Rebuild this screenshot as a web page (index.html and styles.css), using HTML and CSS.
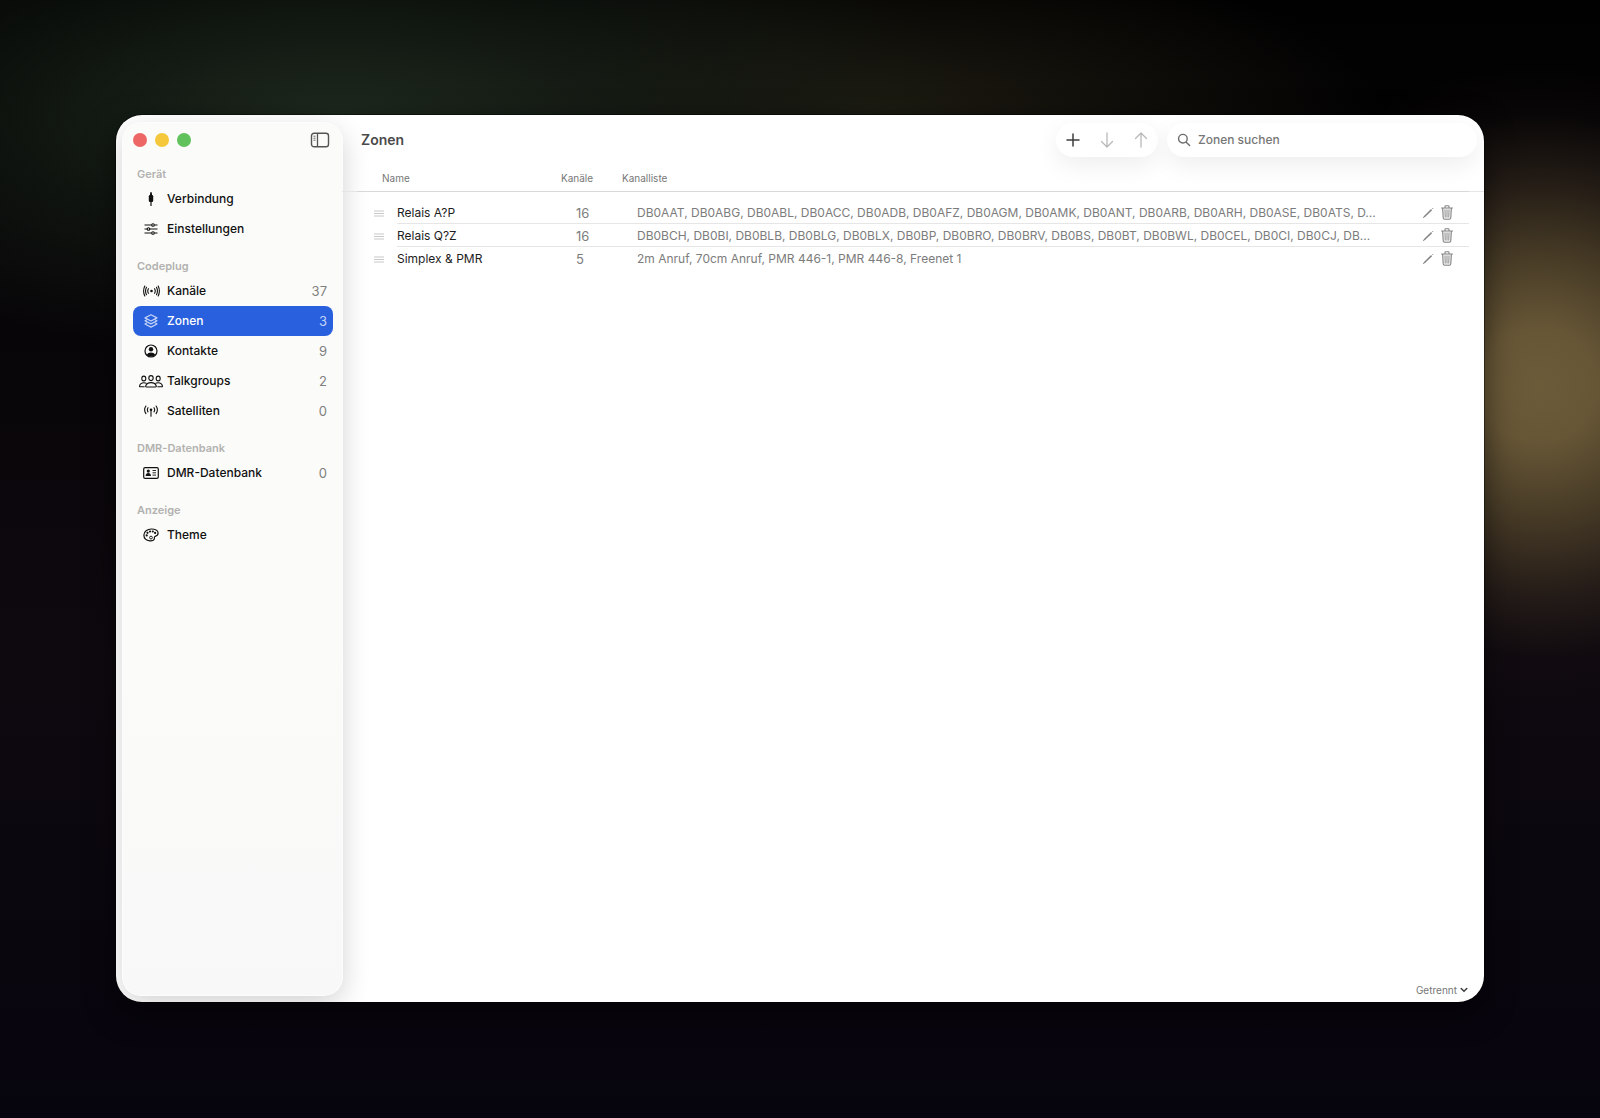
FILE: index.html
```html
<!DOCTYPE html>
<html lang="de">
<head>
  <meta charset="UTF-8">
  <meta name="viewport" content="width=device-width, initial-scale=1.0">
  <title>Zonen</title>
  <link rel="stylesheet" href="styles.css">
</head>
<body>

  <!-- shared icons -->
  <svg width="0" height="0" class="sprite" aria-hidden="true">
    <symbol id="pencil" viewBox="0 0 12 12">
      <path d="M2 10L9.600 2.600" stroke="currentColor" stroke-width="1.500" fill="none"/>
      <path d="M10.200 2L11 1.200M1.200 10.800L2 10" stroke="currentColor" stroke-width="1"/>
    </symbol>
    <symbol id="trash" viewBox="0 0 12 15">
      <path d="M1.600 3l.6 9.700q.1 1.500 1.500 1.500h4.600q1.400 0 1.500-1.500l.6-9.700z" fill="#ececec"/>
      <path d="M.5 3h11M4 3V1.600Q4 .8 4.800.8h2.400q.8 0 .8.800V3M1.600 3l.6 9.700q.1 1.500 1.500 1.500h4.600q1.400 0 1.500-1.500l.6-9.700" fill="none" stroke="currentColor" stroke-width="1.100" stroke-linecap="round"/>
      <path d="M4 5l.3 7M6 5v7M8 5l-.3 7" fill="none" stroke="currentColor" stroke-width=".8" stroke-linecap="round"/>
    </symbol>
    <symbol id="grip" viewBox="0 0 10 7">
      <path d="M0 1h10M0 3.500h10M0 6h10" stroke="currentColor" stroke-width="1.200"/>
    </symbol>
  </svg>

  <div class="window">
    <aside class="sidebar">
      <div class="titlebar">
        <div class="lights">
          <button class="light red" aria-label="Schließen"></button>
          <button class="light yellow" aria-label="Minimieren"></button>
          <button class="light green" aria-label="Vollbild"></button>
        </div>
        <button class="toggle" aria-label="Seitenleiste">
          <svg width="20" height="16" viewBox="0 0 20 16" fill="none" stroke="currentColor">
            <rect x="1.500" y="1.200" width="17" height="13.600" rx="2.600" stroke-width="1.400"/>
            <path d="M7.500 1v14" stroke-width="1.300"/>
            <path d="M3.500 4.200h2M3.500 6.200h2M3.500 8.200h2" stroke-width=".9"/>
          </svg>
        </button>
      </div>

      <nav>
        <h2>Gerät</h2>
        <ul>
          <li><a href="#">
            <span class="icon"><svg width="8" height="16" viewBox="0 0 8 16"><path d="M4 1v14" stroke="currentColor" stroke-width="1.200"/><path d="M3 2.200h2v2H3z" fill="currentColor"/><rect x="1.800" y="4" width="4.400" height="7" rx="1.200" fill="currentColor"/></svg></span>
            Verbindung</a></li>
          <li><a href="#">
            <span class="icon"><svg width="14" height="12" viewBox="0 0 14 12" fill="none" stroke="currentColor" stroke-width="1.100"><path d="M.5 2h7.200M10.300 2h3.200M.5 6h2.700M5.800 6h7.700M.5 10h7.200M10.300 10h3.200"/><circle cx="9" cy="2" r="1.300"/><circle cx="4.500" cy="6" r="1.300"/><circle cx="9" cy="10" r="1.300"/></svg></span>
            Einstellungen</a></li>
        </ul>

        <h2>Codeplug</h2>
        <ul>
          <li><a href="#">
            <span class="icon"><svg width="17" height="12" viewBox="0 0 17 12" fill="none" stroke="currentColor" stroke-width="1.100" stroke-linecap="round"><circle cx="8.500" cy="6" r="1.300" fill="currentColor" stroke="none"/><path d="M5.400 3.700q-1.300 2.300 0 4.600M11.600 3.700q1.300 2.300 0 4.600M3.500 2.300q-1.900 3.700 0 7.400M13.500 2.300q1.900 3.700 0 7.400M1.800 1q-2.400 5 0 10M15.200 1q2.400 5 0 10"/></svg></span>
            Kanäle <span class="count">37</span></a></li>
          <li><a href="#" class="active">
            <span class="icon"><svg width="14" height="14" viewBox="0 0 14 14" fill="none" stroke="currentColor" stroke-width="1.200" stroke-linejoin="round" stroke-linecap="round"><path d="M7 .8l6 3.100-6 3.100-6-3.100zM2.600 5.900L1 6.800l6 3.100 6-3.100-1.600-.9M2.600 9.100L1 10l6 3.100 6-3.100-1.600-.9"/></svg></span>
            Zonen <span class="count">3</span></a></li>
          <li><a href="#">
            <span class="icon"><svg width="14" height="14" viewBox="0 0 14 14"><circle cx="7" cy="7" r="6" fill="none" stroke="currentColor" stroke-width="1.200"/><circle cx="7" cy="5.300" r="2.200" fill="currentColor"/><path d="M2.700 10.800Q4 8.400 7 8.400t4.300 2.400Q9.500 12.800 7 12.800t-4.300-2z" fill="currentColor"/></svg></span>
            Kontakte <span class="count">9</span></a></li>
          <li><a href="#">
            <span class="icon"><svg width="24" height="13" viewBox="0 0 24 13" fill="none" stroke="currentColor" stroke-width="1.100"><ellipse cx="4.800" cy="3.500" rx="2" ry="2.400"/><ellipse cx="12" cy="3.100" rx="2.200" ry="2.500"/><ellipse cx="19.200" cy="3.500" rx="2" ry="2.400"/><path d="M7.400 12q-.9 0-.7-1Q7.600 7.600 12 7.600t5.300 3.400q.2 1-.7 1zM5.600 11.800H1.200q-.8 0-.6-.9.700-3.200 4.200-3.200 1.700 0 2.700.7M18.400 11.800h4.400q.8 0 .6-.9-.7-3.200-4.200-3.200-1.700 0-2.700.7"/></svg></span>
            Talkgroups <span class="count">2</span></a></li>
          <li><a href="#">
            <span class="icon"><svg width="14" height="12" viewBox="0 0 14 12" fill="none" stroke="currentColor" stroke-width="1.100" stroke-linecap="round"><circle cx="7" cy="4.800" r="1.300" fill="currentColor" stroke="none"/><path d="M7 5v6.300M4 2.700q-1.300 2.100 0 4.200M10 2.700q1.300 2.100 0 4.200M1.900 1q-2.600 3.800 0 7.600M12.100 1q2.600 3.800 0 7.600"/></svg></span>
            Satelliten <span class="count">0</span></a></li>
        </ul>

        <h2>DMR-Datenbank</h2>
        <ul>
          <li><a href="#">
            <span class="icon"><svg width="16" height="12" viewBox="0 0 16 12" fill="none" stroke="currentColor"><rect x=".7" y=".7" width="14.600" height="10.600" rx="1.400" stroke-width="1.200"/><circle cx="5.300" cy="4.100" r="1.600" fill="currentColor" stroke="none"/><path d="M2.600 9Q2.800 6 5.300 6t2.700 3z" fill="currentColor" stroke="none"/><path d="M9.500 3.500H13M9.500 5.800H13M9.500 8.100H13" stroke-width=".9"/></svg></span>
            DMR-Datenbank <span class="count">0</span></a></li>
        </ul>

        <h2>Anzeige</h2>
        <ul>
          <li><a href="#">
            <span class="icon"><svg width="16" height="14" viewBox="0 0 16 14" fill="none" stroke="currentColor"><path d="M12.200 8.300c-1.300.3-.6 1.500-.9 2.600C10.900 12.500 9 13 7 12.900 3.400 12.700.9 10.400.9 7.100.9 3.500 4.300 1 8.300 1c3.700 0 6.800 1.600 6.800 4.100 0 2.100-1.500 2.900-2.900 3.200z" stroke-width="1.200"/><circle cx="8" cy="9.600" r="1.400" stroke-width=".9"/><g fill="currentColor" stroke="none"><circle cx="3.700" cy="7.400" r="1.100"/><circle cx="4.500" cy="4.800" r="1.100"/><circle cx="7" cy="3.500" r="1.100"/><circle cx="9.800" cy="3.500" r="1.100"/><circle cx="12.100" cy="4.900" r="1.100"/></g></svg></span>
            Theme</a></li>
        </ul>
      </nav>
    </aside>

    <main>
      <header class="toolbar">
        <h1>Zonen</h1>
        <div class="actions">
          <button aria-label="Hinzufügen">
            <svg width="14" height="14" viewBox="0 0 14 14" fill="none" stroke="currentColor" stroke-width="1.500" stroke-linecap="round"><path d="M7 1v12M1 7h12"/></svg>
          </button>
          <button aria-label="Nach unten" disabled>
            <svg width="14" height="16" viewBox="0 0 14 16" fill="none" stroke="currentColor" stroke-width="1.300" stroke-linecap="round" stroke-linejoin="round"><path d="M7 1v14M1.500 9.500L7 15l5.500-5.500"/></svg>
          </button>
          <button aria-label="Nach oben" disabled>
            <svg width="14" height="16" viewBox="0 0 14 16" fill="none" stroke="currentColor" stroke-width="1.300" stroke-linecap="round" stroke-linejoin="round"><path d="M7 15V1M1.500 6.500L7 1l5.500 5.500"/></svg>
          </button>
        </div>
        <label class="search">
          <svg width="14" height="14" viewBox="0 0 14 14" fill="none" stroke="currentColor" stroke-width="1.400" stroke-linecap="round"><circle cx="5.900" cy="5.700" r="4.300"/><path d="M9.200 9.200l3.400 3.400"/></svg>
          <input type="text" placeholder="Zonen suchen" aria-label="Zonen suchen">
        </label>
      </header>

      <div class="content">
        <table>
          <colgroup>
            <col class="col-grip">
            <col class="col-name">
            <col class="col-count">
            <col>
            <col class="col-edit">
          </colgroup>
          <thead>
            <tr>
              <th colspan="2" class="first">Name</th>
              <th>Kanäle</th>
              <th colspan="2">Kanalliste</th>
            </tr>
          </thead>
          <tbody>
            <tr>
              <td class="grip"><svg width="10" height="7"><use href="#grip"/></svg></td>
              <td class="name">Relais A?P</td>
              <td class="num">16</td>
              <td>DB0AAT, DB0ABG, DB0ABL, DB0ACC, DB0ADB, DB0AFZ, DB0AGM, DB0AMK, DB0ANT, DB0ARB, DB0ARH, DB0ASE, DB0ATS, D...</td>
              <td class="edit">
                <div>
                  <button aria-label="Bearbeiten"><svg width="12" height="12"><use href="#pencil"/></svg></button>
                  <button aria-label="Löschen"><svg width="12" height="15"><use href="#trash"/></svg></button>
                </div>
              </td>
            </tr>
            <tr>
              <td class="grip"><svg width="10" height="7"><use href="#grip"/></svg></td>
              <td class="name">Relais Q?Z</td>
              <td class="num">16</td>
              <td>DB0BCH, DB0BI, DB0BLB, DB0BLG, DB0BLX, DB0BP, DB0BRO, DB0BRV, DB0BS, DB0BT, DB0BWL, DB0CEL, DB0CI, DB0CJ, DB...</td>
              <td class="edit">
                <div>
                  <button aria-label="Bearbeiten"><svg width="12" height="12"><use href="#pencil"/></svg></button>
                  <button aria-label="Löschen"><svg width="12" height="15"><use href="#trash"/></svg></button>
                </div>
              </td>
            </tr>
            <tr>
              <td class="grip"><svg width="10" height="7"><use href="#grip"/></svg></td>
              <td class="name">Simplex &amp; PMR</td>
              <td class="num">5</td>
              <td>2m Anruf, 70cm Anruf, PMR 446-1, PMR 446-8, Freenet 1</td>
              <td class="edit">
                <div>
                  <button aria-label="Bearbeiten"><svg width="12" height="12"><use href="#pencil"/></svg></button>
                  <button aria-label="Löschen"><svg width="12" height="15"><use href="#trash"/></svg></button>
                </div>
              </td>
            </tr>
          </tbody>
        </table>
      </div>

      <footer>
        <button class="status">Getrennt
          <svg width="8" height="6" viewBox="0 0 8 6" fill="none" stroke="currentColor" stroke-width="1.600" stroke-linecap="round" stroke-linejoin="round"><path d="M1.200 1.500L4 4.300l2.800-2.800"/></svg>
        </button>
      </footer>
    </main>
  </div>

</body>
</html>
```
FILE: styles.css
```css
* {
  box-sizing: border-box;
}

body {
  margin: 0;
  min-height: 100vh;
  padding: 115px 116px 116px 116px;
  display: flex;
  font-family: Inter, sans-serif;
  font-size: 12px;
  line-height: 16px;
  color: #1d1d1d;
  background:
    radial-gradient(ellipse 320px 320px at 1540px 385px, #6c5b39 0%, #665636 18%, #54462ccc 42%, #352a1f99 65%, #1c151433 85%, transparent 100%),
    radial-gradient(ellipse 640px 240px at 340px 120px, #1e291e 0%, #17201799 50%, transparent 100%),
    radial-gradient(ellipse 500px 160px at 880px 110px, #1c1a10 0%, transparent 100%),
    linear-gradient(#010101 0%, #0e090f 60%, #06040d 100%);
}

button {
  padding: 0;
  border: none;
  background: none;
  font: inherit;
  color: inherit;
}

svg {
  display: block;
}

.sprite {
  position: absolute;
}

h1, h2, ul {
  margin: 0;
  padding: 0;
}

.window {
  flex: 1;
  display: flex;
  padding: 8px 0 7px 7px;
  border-radius: 26px;
  background: #fff;
  box-shadow: 0 0 0 1px #00000066, 0 10px 30px #00000080;
  overflow: hidden;
}

/* sidebar */
.sidebar {
  width: 219px;
  padding: 8px 9px 8px 10px;
  border-radius: 18px;
  background: linear-gradient(#fbfbf9 60%, #f8f8f8);
  box-shadow: 0 0 0 1px #fdfdfd, 0 8px 28px #00000030;
}

.titlebar {
  display: flex;
  align-items: center;
  justify-content: space-between;
  height: 18px;
  padding-right: 3px;
}

.lights {
  display: flex;
  gap: 8px;
}

.light {
  width: 14px;
  height: 14px;
  border-radius: 50%;
}
.red { background: #ec6765; }
.yellow { background: #f4c83a; }
.green { background: #61c25d; }

.toggle {
  color: #555;
}

nav {
  padding-top: 15px;
}

nav h2 {
  height: 20px;
  padding-left: 4px;
  font-size: 11px;
  font-weight: 600;
  line-height: 20px;
  color: #b2b2b0;
}

nav ul {
  list-style: none;
  margin-bottom: 12px;
}

nav a {
  display: flex;
  align-items: center;
  height: 30px;
  padding-right: 6px;
  border-radius: 8px;
  font-weight: 500;
  color: #111;
  text-decoration: none;
}
nav a.active {
  background: #2860dd;
  color: #fff;
}

.icon {
  width: 34px;
  display: flex;
  justify-content: center;
  padding-left: 2px;
}

.active .icon {
  color: #c3d3f7;
}

.count {
  margin-left: auto;
  font-size: 13px;
  font-weight: 400;
  color: #808080;
}
.active .count {
  color: #c3d3f7;
}

/* main area */
main {
  flex: 1;
  min-width: 0;
  display: flex;
  flex-direction: column;
}

.toolbar {
  display: flex;
  align-items: center;
  height: 34px;
  padding: 0 7px 0 19px;
}

.toolbar h1 {
  flex: 1;
  font-size: 14px;
  font-weight: 600;
  color: #4a4a4a;
}

.actions {
  display: flex;
  margin-right: 9px;
  border-radius: 17px;
  background: #fff;
  box-shadow: 0 8px 24px #00000012;
}
.actions button {
  display: flex;
  align-items: center;
  justify-content: center;
  width: 34px;
  height: 34px;
  color: #3c3c3c;
}
.actions button:disabled {
  color: #b8b8b8;
}

.search {
  display: flex;
  align-items: center;
  gap: 7px;
  width: 310px;
  height: 34px;
  padding: 0 10px;
  border-radius: 17px;
  background: #fff;
  box-shadow: 0 8px 24px #00000012;
  color: #6c6c6c;
}
.search input {
  flex: 1;
  min-width: 0;
  padding: 0;
  border: none;
  outline: none;
  background: none;
  font: inherit;
  font-weight: 500;
}
.search input::placeholder {
  color: #777;
  opacity: 1;
}

.content {
  flex: 1;
  padding: 8px 15px 0;
  background: linear-gradient(#e6e6e6, #e6e6e6) 0 34px / 100% 1px no-repeat;
}

table {
  width: 100%;
  table-layout: fixed;
  border-collapse: separate;
  border-spacing: 0;
}

.col-grip { width: 40px; }
.col-name { width: 164px; }
.col-count { width: 61px; }
.col-edit { width: 64px; }

th {
  height: 27px;
  padding: 0 0 1px;
  border-bottom: 1px solid #d9d9d9;
  font-size: 10px;
  font-weight: 400;
  text-align: left;
  color: #777;
}
th.first {
  padding-left: 25px;
}

td {
  height: 23px;
  padding: 1px 0 0 15px;
  border-bottom: 1px solid #e6e6e6;
  color: #7c7c7c;
  white-space: nowrap;
}
tbody tr:first-child td {
  height: 32px;
  padding-top: 10px;
}
tbody tr:last-child td {
  border-bottom-color: transparent;
}

td.grip {
  padding-left: 17px;
  border-bottom: none;
  color: #c8c8c8;
}
td.name {
  padding-left: 0;
  color: #1d1d1d;
}
td.num {
  font-size: 13px;
}
td.edit {
  padding-left: 17px;
}

.edit div {
  display: flex;
  align-items: center;
  gap: 7px;
}
.edit button {
  color: #858585;
}

footer {
  display: flex;
  justify-content: flex-end;
  height: 10px;
  padding-right: 16px;
}

.status {
  display: flex;
  align-items: center;
  gap: 3px;
  font-size: 10px;
  line-height: 10px;
  color: #777;
}
.status svg {
  color: #444;
}
```
